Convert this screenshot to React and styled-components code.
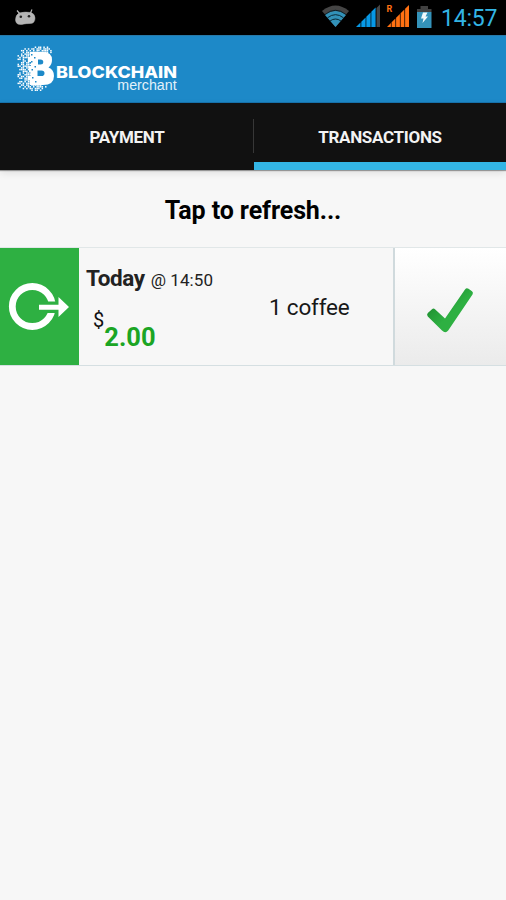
import styled, { createGlobalStyle } from 'styled-components';

const GlobalStyle = createGlobalStyle`
  body {
    margin: 0;
    background-color: #f7f7f7;
    font-family: Roboto, 'Liberation Sans', sans-serif;
  }
`;

const Screen = styled.div`
  display: flex;
  flex-direction: column;
  width: 100%;
  height: 100vh;
  overflow: hidden;
  background-color: #f7f7f7;
`;

const StatusBar = styled.div`
  display: flex;
  justify-content: space-between;
  flex-shrink: 0;
  height: 35px;
  background-color: #000;
`;

const StatusIcons = styled.div`
  display: flex;
`;

const Clock = styled.div`
  width: 65px;
  font-size: 23px;
  line-height: 37px;
  letter-spacing: -.2px;
  color: #33b5e5;
  white-space: nowrap;
`;

const Header = styled.div`
  flex-shrink: 0;
  height: 68px;
  box-sizing: border-box;
  background-color: #1d89c8;
  border-top: 1px solid #2779a8;
  border-bottom: 1px solid #1874ae;
`;

const Tabs = styled.div`
  display: grid;
  grid-template-columns: 254px 1fr;
  flex-shrink: 0;
  height: 67px;
  background-color: #111;
  box-shadow: 0 1px 1px rgba(0, 0, 0, .35), 0 3px 8px rgba(0, 0, 0, .1);
`;

const Tab = styled.div`
  display: flex;
  justify-content: center;
  align-items: center;
  box-sizing: border-box;
  padding-top: 8px;
  border-bottom: 8px solid ${props => props.$active ? '#33b5e5' : '#111'};
  background: ${props => props.$active ? 'none' : 'linear-gradient(#373737, #373737) right 16px / 1px 34px no-repeat'};
  color: #f3f3f3;
  font-size: 17px;
  font-weight: 700;
  letter-spacing: -.3px;
`;

const Refresh = styled.div`
  display: flex;
  justify-content: center;
  align-items: center;
  flex-shrink: 0;
  height: 77px;
  padding-top: 4px;
  box-sizing: border-box;
  color: #000;
  font-size: 25px;
  font-weight: 700;
  letter-spacing: -.1px;
`;

const Transaction = styled.div`
  display: grid;
  grid-template-columns: 78.5px 178.5px 1fr 113.5px;
  flex-shrink: 0;
  height: 119px;
  box-sizing: border-box;
  border-top: 1px solid #e1e7e8;
  border-bottom: 1px solid #d5dfe2;
`;

const Direction = styled.div`
  background-color: #2eb042;
`;

const Details = styled.div`
  padding: 16px 0 0 7.5px;
  color: #222;
`;

const When = styled.div`
  display: flex;
  align-items: baseline;
  gap: 6px;
  height: 44px;
  line-height: 28px;
  white-space: nowrap;
`;

const Day = styled.span`
  font-size: 22.5px;
  font-weight: 700;
  letter-spacing: -.4px;
`;

const Time = styled.span`
  font-size: 17px;
  letter-spacing: .1px;
`;

const Price = styled.div`
  display: flex;
  align-items: flex-start;
  padding-left: 7px;
`;

const Currency = styled.span`
  color: #111;
  font-size: 20px;
  line-height: 24px;
`;

const Amount = styled.span`
  padding-top: 14px;
  color: #1ba524;
  font-size: 25.5px;
  font-weight: 700;
  line-height: 30px;
`;

const Description = styled.div`
  padding: 45px 0 0 12px;
  color: #181818;
  font-size: 22.5px;
  line-height: 28px;
  letter-spacing: -.2px;
  white-space: nowrap;
`;

const Confirmed = styled.div`
  box-sizing: border-box;
  border-left: 2px solid #d0dadd;
  background: linear-gradient(#fff, #ebebeb);
`;

const Svg = styled.svg`
  display: block;
`;

// The scattered squares round the logo, one character for each 1.72px cell
const PIXELS = [
  '..........#.##.#.#',
  '....#.#.##.###.####',
  '..##.#.#.#.##.####.#',
  '...#.##.####.#####.#',
  '..#.####.######',
  '#.##.##.##.####',
  '.#.####.##',
  '##.#..####',
  '...##.##.#',
  '..##.##.##',
  '#.##.####',
  '##.####.#',
  '..##.####',
  '.####.###',
  '...###.##',
  '.#.#.###',
  '##..####',
  '#.##.#.##',
  '.##.##.##',
  '....#####',
  '.##.#.##.#',
  '##.#.###.###',
  '..##.##.######',
  '.#..#.##.#.####.#',
  '...#.#.##.###.#',
  '........#.##.#',
];

const AndroidHead = () => (
  <Svg width="60" height="35">
    <g fill="#b5b5b5" stroke="#b5b5b5">
      <path d="M17 10.5L20 14M32 9.5L30 14" strokeWidth="1.2" />
      <path d="M19 13Q25 11.5 31 12.5Q35 14 35 18Q35 23.5 30 23.5Q26 23.5 24 24Q16 26 15.5 20Q15.5 15 19 13Z" strokeWidth=".5" />
    </g>
    <circle cx="20.8" cy="16.8" r="1.3" fill="#222" />
    <circle cx="29" cy="16.2" r="1.3" fill="#222" />
  </Svg>
);

const Signals = () => (
  <Svg width="119" height="35">
    <path d="M0 11Q13.5 0 27 11L13.5 27Z" fill="#454545" />
    <path d="M3 15Q13.5 7 24 15L13.5 27Z" fill="#3292b9" />
    <path d="M3 14.5Q13.5 6 24 14.5M5.5 17.8Q13.5 11.5 21.5 17.8M8 21Q13.5 17 19 21" fill="none" stroke="#061c25" strokeWidth=".9" />
    <g fill="#0798e5">
      <path d="M34 27L38.5 22.5V27Z" />
      <path d="M39.3 21.7L43.6 17.4V27H39.3Z" />
      <path d="M44.3 16.7L48.6 12.4V27H44.3Z" />
      <path d="M49.3 11.7L53.6 7.4V27H49.3Z" />
    </g>
    <path d="M54.5 8L58 4.5V27H54.5Z" fill="#464646" />
    <g fill="#ff7112">
      <path d="M65 27L68.9 23.1V27Z" />
      <path d="M69.6 22.2L73.4 18.4V27H69.6Z" />
      <path d="M74.1 17.7L77.9 13.9V27H74.1Z" />
      <path d="M78.6 13.2L82.4 9.4V27H78.6Z" />
      <path d="M83.1 8.7L87 5V27H83.1Z" />
      <text x="64.5" y="12" fontSize="9" fontWeight="700">R</text>
    </g>
    <path d="M95 9H98.5V6H106V9H109.5V12H95Z" fill="#414141" />
    <path d="M95 12H109.5V28H95Z" fill="#3493ba" />
    <path d="M101 12.5H105.5L103.5 16.5H106L100.5 23L101.5 18.5H99Z" fill="#f2fafc" />
  </Svg>
);

const Logo = () => (
  <Svg width="190" height="66" viewBox="0 36 190 66">
    <g fill="#fff">
      {PIXELS.map((row, y) => row.split('').map((cell, x) => cell === '#' && (
        <rect key={`${x}-${y}`} x={17.5 + x * 1.72} y={46.5 + y * 1.72} width="1.5" height="1.5" />
      )))}
      <path fillRule="evenodd" d="M30 52H43Q52 52 52 60Q52 65 48.5 67.5Q54 69.5 54 76Q54 85 43 85H30V80H28V76H31V72H29V66H31V62H28V57H30ZM38 59.5V64.5H40.5Q43.3 64.5 43.3 62Q43.3 59.5 40.5 59.5ZM37.5 70.5V76H41.5Q44.5 76 44.5 73.2Q44.5 70.5 41.5 70.5Z" />
    </g>
    <path d="M31 54h1.5v1.5h-1.5zM34 57h1.5v1.5h-1.5zM31 61h1.5v1.5h-1.5zM34.5 66h1.5v1.5h-1.5zM31.5 69h1.5v1.5h-1.5zM32 77h1.5v1.5h-1.5zM35 81h1.5v1.5h-1.5z" fill="#1d89c8" />
    <text x="56" y="78.4" textLength="121" lengthAdjust="spacingAndGlyphs" fill="#fff" fontFamily="Inter, sans-serif" fontSize="16.6" fontWeight="800">BLOCKCHAIN</text>
    <text x="117.3" y="89.8" textLength="59.3" lengthAdjust="spacingAndGlyphs" fill="#e2f1fa" fontFamily="'Liberation Sans', sans-serif" fontSize="14">merchant</text>
  </Svg>
);

const SentIcon = () => (
  <Svg width="78" height="117">
    <circle cx="32.3" cy="58.5" r="20" fill="none" stroke="#fff" strokeWidth="6.8" />
    <path d="M44 53.5H60V65H44Z" fill="#2eb042" />
    <path d="M39 56.7H58.5V49L69 59L58.5 69V61.7H39Z" fill="#fff" />
  </Svg>
);

const CheckIcon = () => (
  <Svg width="111" height="117">
    <defs>
      <linearGradient id="check" x1="0" y1="0" x2="1" y2="1">
        <stop offset=".3" stopColor="#239735" />
        <stop offset=".55" stopColor="#2eb042" />
      </linearGradient>
    </defs>
    <path d="M32.8 65L37 61.2Q38.5 60 40 61.2L50 70.5L70 41.5Q71.5 39.5 73.5 40.8L77 43.2Q78.7 44.5 77.5 46.5L53.2 82.5Q50.5 86 47 82.5L32.8 68.5Q31.3 66.8 32.8 65Z" fill="url(#check)" />
  </Svg>
);

export default function App() {
  return (
    <Screen>
      <GlobalStyle />
      <StatusBar>
        <AndroidHead />
        <StatusIcons>
          <Signals />
          <Clock>14:57</Clock>
        </StatusIcons>
      </StatusBar>
      <Header>
        <Logo />
      </Header>
      <Tabs>
        <Tab>PAYMENT</Tab>
        <Tab $active>TRANSACTIONS</Tab>
      </Tabs>
      <Refresh>Tap to refresh...</Refresh>
      <Transaction>
        <Direction>
          <SentIcon />
        </Direction>
        <Details>
          <When>
            <Day>Today</Day>
            <Time>@ 14:50</Time>
          </When>
          <Price>
            <Currency>$</Currency>
            <Amount>2.00</Amount>
          </Price>
        </Details>
        <Description>1 coffee</Description>
        <Confirmed>
          <CheckIcon />
        </Confirmed>
      </Transaction>
    </Screen>
  );
}
